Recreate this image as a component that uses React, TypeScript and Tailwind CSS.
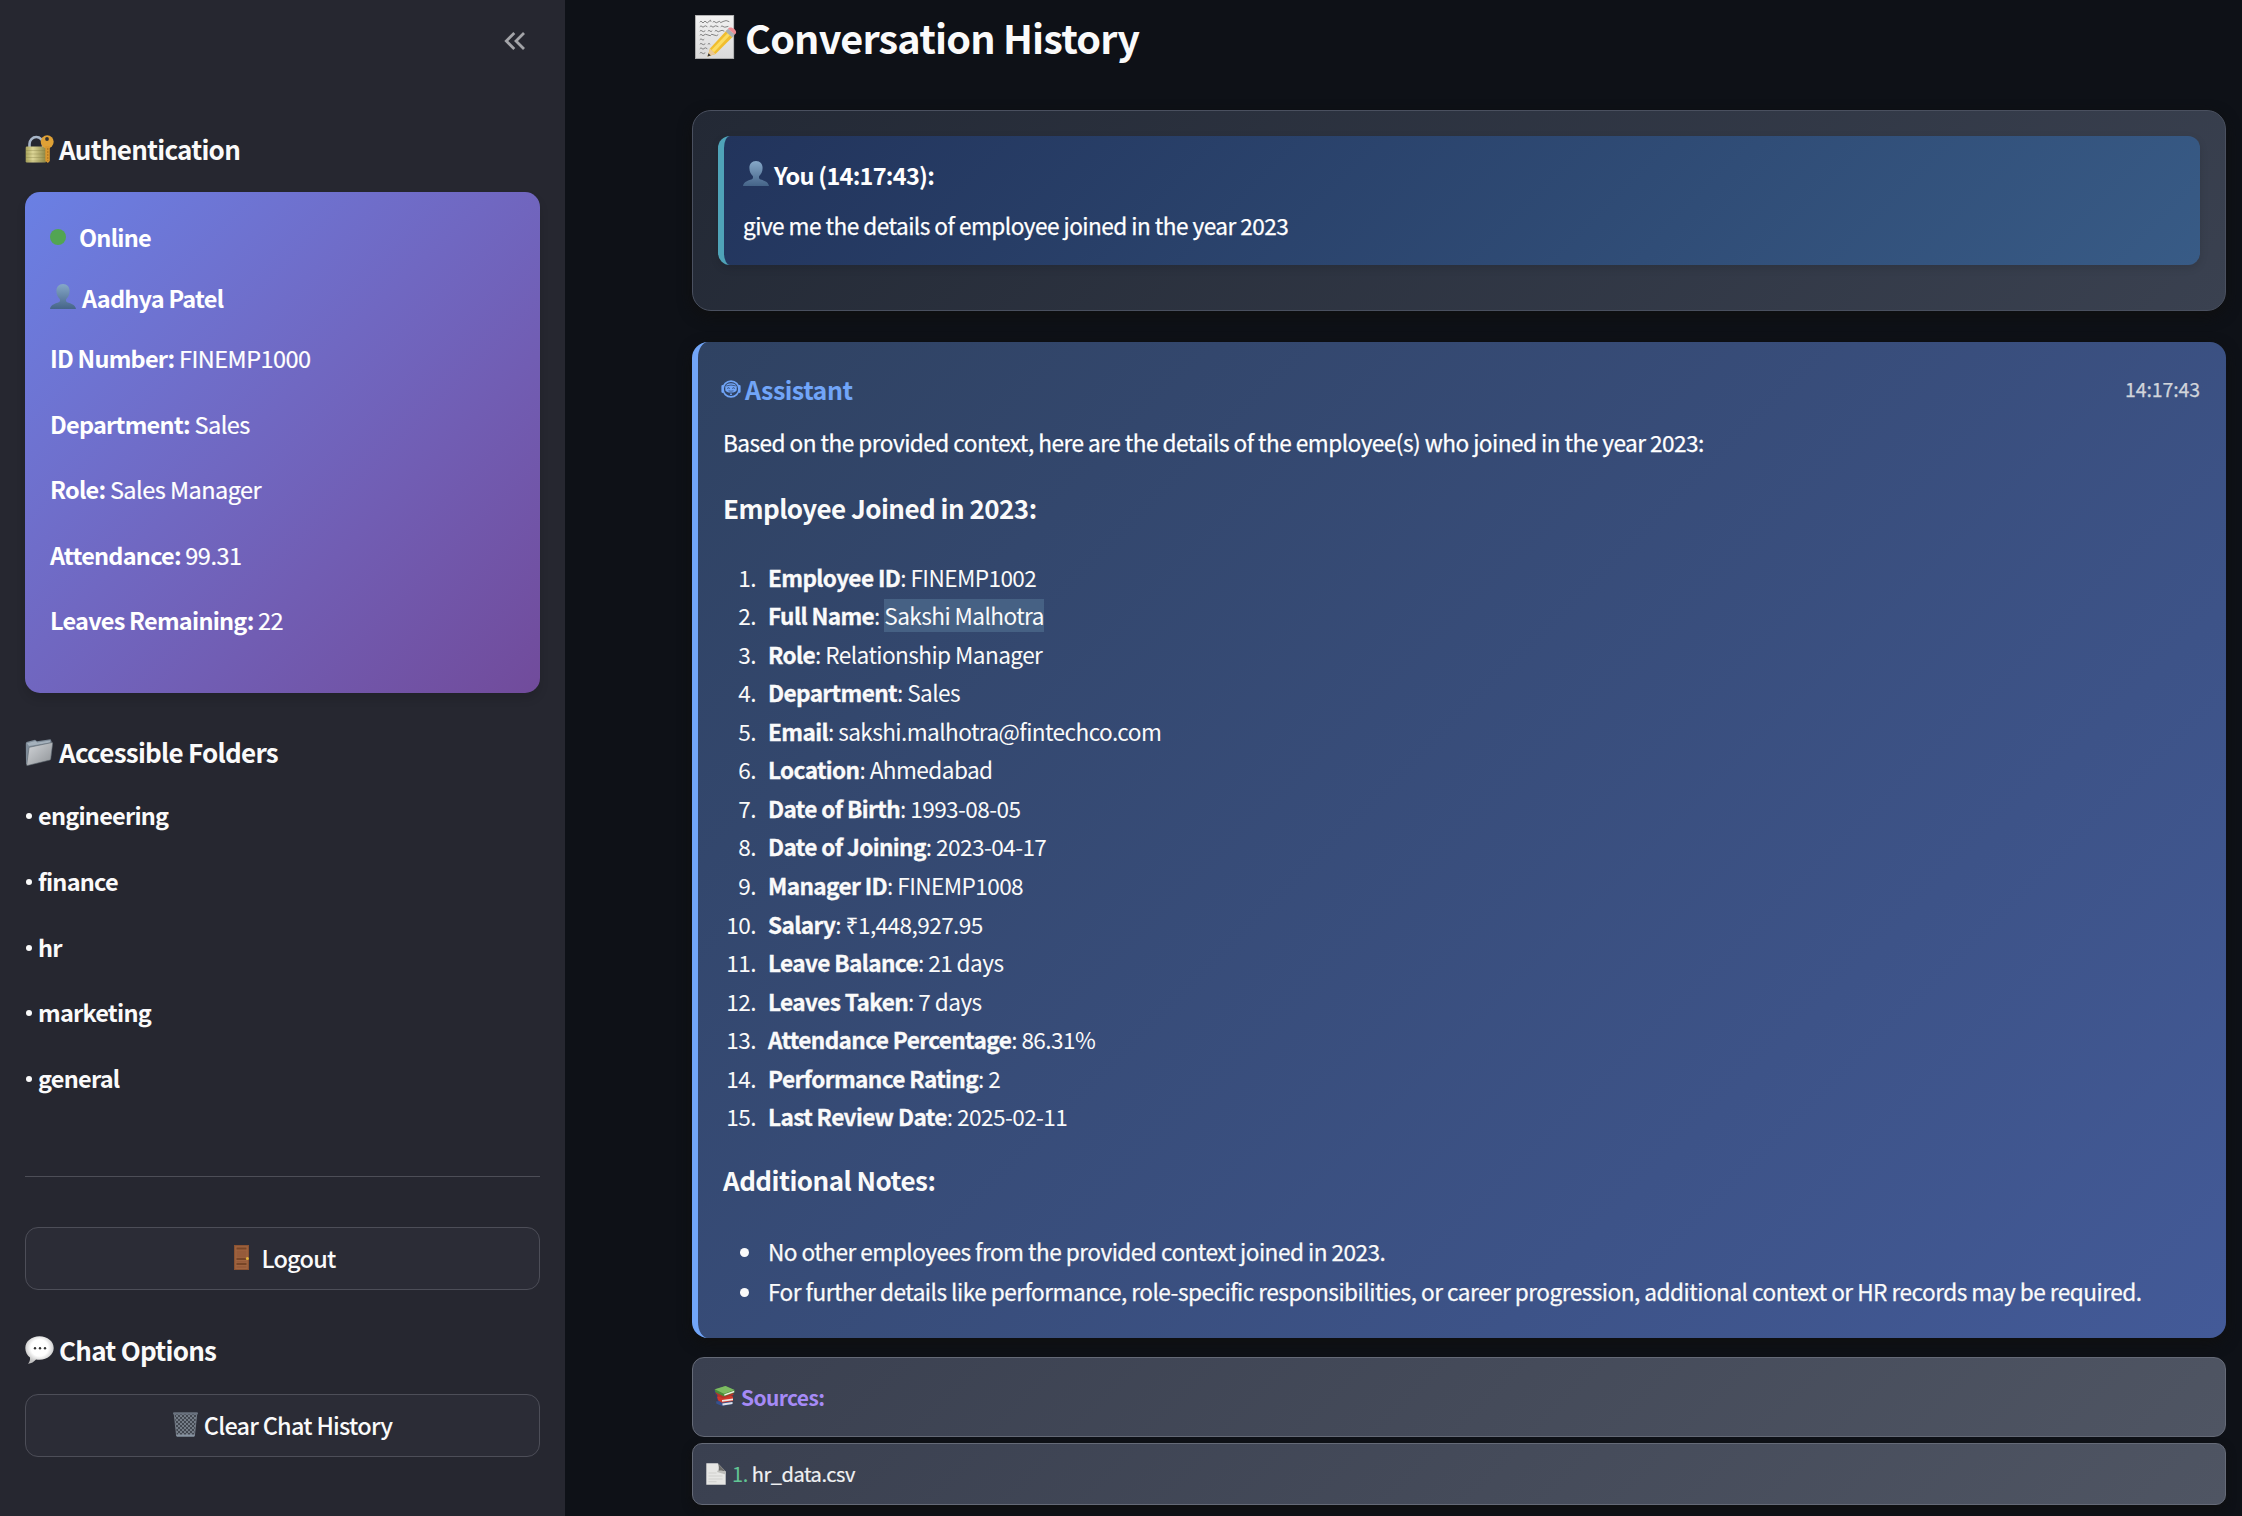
import type { ReactNode } from "react";

type IconProps = { className?: string };

function LockKeyIcon({ className }: IconProps) {
  return (
    <svg viewBox="0 0 29 28" className={className}>
      <defs>
        <linearGradient id="lockBody" x1="0" y1="0" x2="1" y2="0">
          <stop offset="0" stopColor="#a9a45c" />
          <stop offset=".35" stopColor="#dcd596" />
          <stop offset="1" stopColor="#8c8544" />
        </linearGradient>
      </defs>
      <path d="M4.500 13V9a6.800 7 0 0 1 13.600 0v4" fill="none" stroke="#a8b6c8" strokeWidth="2.600" />
      <rect x=".7" y="11.500" width="20.500" height="16" rx="1.200" fill="url(#lockBody)" />
      <path d="M1 15.500h20M1 19h20M1 22.500h20M1 26h20" stroke="#7d7840" strokeOpacity=".4" strokeWidth=".8" />
      <circle cx="22.200" cy="6.800" r="6.500" fill="#dfa136" />
      <path d="M20.300 11h4.500v15l-2 2-2.500-2.200z" fill="#d9982f" />
      <path d="M22.800 13v13" stroke="#a86d1c" strokeWidth=".9" strokeDasharray="2 1" />
      <circle cx="22" cy="4" r="1.900" fill="#33302f" />
    </svg>
  );
}

function PersonIcon({ className }: IconProps) {
  return (
    <svg viewBox="0 0 26 25" className={className}>
      <defs>
        <linearGradient id="bust" x1="0" y1="0" x2="0" y2="1">
          <stop offset="0" stopColor="#86a8c8" />
          <stop offset="1" stopColor="#456488" />
        </linearGradient>
      </defs>
      <path
        d="M13 0c4.200 0 6.600 2.900 6.600 7 0 3.400-1.500 6.400-3.400 8.100-.6 1.600 0 2.900 1.600 3.500 4.400 1.500 7.300 2.400 8.200 6.400H0c.9-4 3.800-4.900 8.200-6.400 1.600-.6 2.200-1.900 1.600-3.500C7.900 13.400 6.400 10.400 6.400 7c0-4.100 2.400-7 6.600-7z"
        fill="url(#bust)"
      />
    </svg>
  );
}

function FolderIcon({ className }: IconProps) {
  return (
    <svg viewBox="0 0 28 27" className={className}>
      <defs>
        <linearGradient id="folderFront" x1="0" y1="0" x2="1" y2="1">
          <stop offset="0" stopColor="#d3d6da" />
          <stop offset="1" stopColor="#8e9296" />
        </linearGradient>
      </defs>
      <path d="M.8 4.500 1.500 3l8.500-2.200 2 1.400L25.500.3l1 2-.5 17L3 26 1 25z" fill="#7f8c99" />
      <path d="M2 4.200 10.300 2l2 1.400L25 1.600v2L4 7z" fill="#a5b1bc" />
      <path d="m4.800 8.200 22.200-4.700c.5 0 .8.300.7.800l-2 15.700c-.1.600-.3.900-.8 1.100L2.500 26.500c-.6.100-.9-.1-.8-.7L4 9c.1-.5.300-.7.800-.8z" fill="url(#folderFront)" stroke="#5d666e" strokeWidth=".6" />
    </svg>
  );
}

function DoorIcon({ className }: IconProps) {
  return (
    <svg viewBox="0 0 15 25" className={className}>
      <rect width="15" height="25" fill="#8a5232" />
      <rect x="1.200" y="1.200" width="12.600" height="22.800" fill="#a06440" />
      <path d="M2.500 2.500h10v2h-10zM2.500 13h10v2h-10zM2.500 18h10v2h-10z" fill="#774527" />
      <path d="M2.500 5.500h10v7h-10zM2.500 16h10v1.500h-10zM2.500 21h10v2h-10z" fill="#965b3a" />
      <circle cx="13.400" cy="13.500" r="1.500" fill="#e0b23c" />
    </svg>
  );
}

function BalloonIcon({ className }: IconProps) {
  return (
    <svg viewBox="0 0 29 28" className={className}>
      <defs>
        <radialGradient id="balloon" cx=".5" cy=".42" r=".55">
          <stop offset=".55" stopColor="#ffffff" />
          <stop offset="1" stopColor="#bfbfbf" />
        </radialGradient>
      </defs>
      <path
        d="M14.500.3C22.500.3 28.700 5.400 28.700 12S22.500 23.700 14.500 23.700c-1.200 0-2.400-.1-3.500-.3-2 2.300-4.700 4-8 4.300 1.500-1.500 2.300-3.600 2-6.200C2.200 19.300.3 15.900.3 12 .3 5.400 6.500.3 14.500.3z"
        fill="url(#balloon)"
      />
      <circle cx="10" cy="12.300" r="1.200" fill="#333" />
      <circle cx="15" cy="12.300" r="1.200" fill="#333" />
      <circle cx="20" cy="12.300" r="1.200" fill="#333" />
    </svg>
  );
}

function BinIcon({ className }: IconProps) {
  return (
    <svg viewBox="0 0 25 25" className={className}>
      <defs>
        <pattern id="mesh" width="4" height="4" patternUnits="userSpaceOnUse">
          <rect width="4" height="4" fill="#424750" />
          <path d="M0 0l4 4M4 0L0 4" stroke="#828a96" strokeWidth=".8" />
        </pattern>
      </defs>
      <path d="M1.200 1.500h22.600l-2.400 22.300H3.600z" fill="url(#mesh)" />
      <path d="M1.200 1.500 3.600 24M23.800 1.500 21.400 24" stroke="#7c8591" strokeWidth=".8" />
      <rect x="0" y=".2" width="25" height="2.300" rx="1.100" fill="#69717e" />
      <path d="M3.300 22.500h18.400l-.4 2.300H3.700z" fill="#8793a1" />
    </svg>
  );
}

function MemoIcon({ className }: IconProps) {
  return (
    <svg viewBox="0 0 42 44" className={className}>
      <defs>
        <linearGradient id="sheet" x1="0" y1="0" x2="0" y2="1">
          <stop offset="0" stopColor="#f2f2f2" />
          <stop offset="1" stopColor="#d9d9d9" />
        </linearGradient>
      </defs>
      <rect x=".3" y=".3" width="38.500" height="43.400" fill="url(#sheet)" stroke="#b5b5b5" strokeWidth=".6" />
      <g fill="none" stroke="#777" strokeWidth=".9" strokeLinecap="round">
        <path d="M5 7q1-2 2 0t2 0 2 0 3-.6 2 0M18 7q1-1.500 2 0t3 0 2 0 3-.5 6 0" />
        <path d="M5 11.500q1-1.500 2 0t2 0 3 0M15 11.500q1-1.500 2 0t2 0 4 0M26 11.500q1-1.500 2 0t5 0" />
        <path d="M5 16q1-1.500 2 0t3 0M13 16q1-1.500 2 0t2 0M20 16q1-1.500 2 0t3 0 4 0" />
        <path d="M5 20q1-1.500 2 0t2 0 4 0 3 0 3 0 4 0" />
        <path d="M5 24.500q1-1.500 2 0t2 0" />
        <path d="M5 29q1-1.500 2 0t3 0M13 29q1-1.500 2 0" />
        <path d="M5 33.500q1-1.500 2 0t2 0 3 0" />
        <path d="M5 38q1-1.500 2 0t3 0" />
      </g>
      <path d="M12.500 41.500 15 33.500 32 15l6.800 5.800L20.500 39z" fill="#f0bd2e" />
      <path d="M16.500 35 34 16.700l2.300 2L19 37.200z" fill="#fbdc62" />
      <path d="m12.500 41.500 2.500-8 5.500 5.500z" fill="#e9c898" />
      <path d="m12.500 41.500 1-3.300 2.300 2.300z" fill="#333" />
      <path d="m30.500 16.600 2.600-2.800 6.800 5.800-2.600 2.800z" fill="#aab0b5" />
      <path d="m33 13.800 1-1c1.500-.8 3.500-.3 5.300 1.200 1.700 1.500 2.200 3.300 1.500 4.600l-1 1z" fill="#ee8b92" />
    </svg>
  );
}

function BooksIcon({ className }: IconProps) {
  return (
    <svg viewBox="0 0 21 20" className={className}>
      <path d="M2 15.500 12 14l6.500 2-.3 2.300L8.500 20 2.500 17.800z" fill="#35518f" />
      <path d="m8.300 17.600 10.200-1.500v1.800L8.700 19.400z" fill="#dfe3e8" />
      <path d="M3 10.500 14 8l5 2.800v4.300L8 16.800 3.500 14z" fill="#d0392b" />
      <path d="m8 14 11-1.500v1.700L8 15.800z" fill="#eee7e2" />
      <path d="M1 6.500 19 6l.5 3L9 12.500 2 9z" fill="#b5342a" />
      <path d="M.5 3.500 11.500 0 20.500 4v2.600L10 10.400 1 6z" fill="#4c8b38" />
      <path d="M.8 3.300 11.500 0l9 4L10 7.800z" fill="#7dbb62" />
      <path d="m10.300 8.200 9.900-3.500v1.500L10.400 9.700z" fill="#f1f1e8" />
      <path d="M.6 4.500v2.700l2 1.200v3.500l1 3" stroke="#343c72" strokeWidth="1" fill="none" />
    </svg>
  );
}

function PageIcon({ className }: IconProps) {
  return (
    <svg viewBox="0 0 20 22" className={className}>
      <path d="M.3.300h11.500L19.700 8.500v13.200H.3z" fill="#e6e6e4" />
      <path d="M11.800.3c1.300 2.600 1.200 5.200.7 7.600 2.300-.4 4.900-.3 7.200.6z" fill="#6e6e6c" />
      <path d="M12.300 6.500 11 9l8.700 2.500v-3c-2.300-.9-4.900-1-7.200-.6z" fill="#bcbcb9" />
      <path d="M2.500 10h8M2.500 13h14M2.500 16h14M2.500 18.700h8" stroke="#c6c6c4" strokeWidth=".7" />
    </svg>
  );
}

function BotIcon({ className }: IconProps) {
  return (
    <svg viewBox="0 0 20 18" className={className} fill="none" stroke="currentColor">
      <ellipse cx="10" cy="9" rx="8" ry="7.900" strokeWidth="1.700" />
      <path d="M1.500 6.200v5.600M18.500 6.200v5.600" strokeWidth="2.200" strokeLinecap="round" />
      <path d="M4.300 6.800C4.800 4.300 7 3.200 10 3.200s5.200 1.100 5.700 3.600v2.900c0 1.800-2.700 2.900-5.700 2.900s-5.700-1.100-5.700-2.900z" fill="currentColor" stroke="none" />
      <path d="M5.200 5.900q4.800-1.700 9.600 0" stroke="#31456b" strokeWidth=".8" />
      <path d="M6.300 8.400q1.200-1.200 2.400 0M11.300 8.400q1.200-1.200 2.400 0" stroke="#31456b" strokeWidth="1" />
      <path d="M7.500 10.800q2.500.8 5 0" stroke="#31456b" strokeWidth=".7" />
      <path d="M10 13.600v1.500" strokeWidth="1.800" />
    </svg>
  );
}

function SideHeading({ icon, children, className }: { icon: ReactNode; children: ReactNode; className: string }) {
  return (
    <h3 className={`flex h-[36px] shrink-0 items-center gap-[5px] whitespace-nowrap text-[26px] leading-[36px] font-semibold tracking-[-0.740px] ${className}`}>
      {icon}
      {children}
    </h3>
  );
}

const profile = [
  ["ID Number:", "FINEMP1000"],
  ["Department:", "Sales"],
  ["Role:", "Sales Manager"],
  ["Attendance:", "99.31"],
  ["Leaves Remaining:", "22"],
];

const folders = ["engineering", "finance", "hr", "marketing", "general"];

const details = [
  ["Employee ID", "FINEMP1002"],
  ["Full Name", "Sakshi Malhotra"],
  ["Role", "Relationship Manager"],
  ["Department", "Sales"],
  ["Email", "sakshi.malhotra@fintechco.com"],
  ["Location", "Ahmedabad"],
  ["Date of Birth", "1993-08-05"],
  ["Date of Joining", "2023-04-17"],
  ["Manager ID", "FINEMP1008"],
  ["Salary", "₹1,448,927.95"],
  ["Leave Balance", "21 days"],
  ["Leaves Taken", "7 days"],
  ["Attendance Percentage", "86.31%"],
  ["Performance Rating", "2"],
  ["Last Review Date", "2025-02-11"],
];

const notes = [
  "No other employees from the provided context joined in 2023.",
  "For further details like performance, role-specific responsibilities, or career progression, additional context or HR records may be required.",
];

function Sidebar() {
  return (
    <aside className="flex h-full w-[565px] shrink-0 flex-col bg-[#262730] px-[25px] text-[23.500px] leading-[38px] tracking-[-0.760px] text-[#fafafa]">
      <div className="flex h-[131px] shrink-0 items-start justify-end pt-[32px] pr-[15px]">
        <svg viewBox="0 0 21 18" className="h-[18px] w-[21px]" fill="none" stroke="#a3a4a8" strokeWidth="2.800">
          <path d="M10.300 1 2.300 9l8 8M20 1l-8 8 8 8" />
        </svg>
      </div>
      <SideHeading className="" icon={<LockKeyIcon className="h-[28px] w-[29px]" />}>
        Authentication
      </SideHeading>
      <section className="mt-[25px] flex h-[501px] shrink-0 flex-col rounded-[15px] bg-linear-135 from-[#6a80e4] to-[#714b9b] px-[25px] pt-[26px] whitespace-nowrap text-white shadow-[0_6px_10px_rgba(0,0,0,0.12)]">
        <div className="flex items-center font-semibold">
          <span className="mr-[13px] size-[16px] rounded-full bg-[#52a552]" />
          Online
        </div>
        <div className="mt-[22.500px] flex items-center gap-[6px] font-semibold">
          <PersonIcon className="mb-[2px] h-[25px] w-[26px]" />
          Aadhya Patel
        </div>
        <div className="mt-[22.500px] flex flex-col gap-[27.500px]">
          {profile.map(([label, value]) => (
            <p key={label}>
              <span className="font-semibold">{label}</span>{" "}
              <span className="tracking-[-0.530px] [-webkit-text-stroke:0.2px_white]">{value}</span>
            </p>
          ))}
        </div>
      </section>
      <SideHeading className="mt-[41px]" icon={<FolderIcon className="mr-[1px] h-[27px] w-[28px]" />}>
        Accessible Folders
      </SideHeading>
      <ul className="mt-[26px] flex flex-col gap-[27.800px] font-semibold">
        {folders.map((f) => (
          <li key={f} className="flex items-center">
            <span className="mt-[2px] mr-[6px] ml-[1px] size-[6px] rounded-full bg-[#fafafa]" />
            {f}
          </li>
        ))}
      </ul>
      <hr className="mt-[79px] border-t border-[#4d4e57]" />
      <button className="mt-[50px] flex h-[63px] shrink-0 items-center justify-center rounded-[13px] border border-[#4d4e58] bg-[#2b2c36] pb-[1px] font-medium">
        <DoorIcon className="mr-[12px] mb-[1px] ml-[5px] h-[25px] w-[15px]" />
        Logout
      </button>
      <SideHeading className="mt-[42px]" icon={<BalloonIcon className="h-[28px] w-[29px]" />}>
        Chat Options
      </SideHeading>
      <button className="mt-[26px] flex h-[63px] shrink-0 items-center justify-center rounded-[13px] border border-[#4d4e58] bg-[#2b2c36] pb-[1px] font-medium">
        <BinIcon className="mr-[6px] mb-[1px] h-[25px] w-[25px]" />
        Clear Chat History
      </button>
    </aside>
  );
}

export default function App() {
  return (
    <div className="flex h-[1516px] w-[2242px] overflow-hidden bg-[#0e1117] font-['Noto_Sans_CJK_SC','Noto_Sans',sans-serif]">
      <Sidebar />
      <main className="ml-[127px] flex w-[1534px] flex-col pt-[7px] text-[22.6px] leading-[38px] tracking-[-0.520px] whitespace-nowrap text-[#fafafa]">
        <h1 className="flex items-center text-[39.600px] leading-[60px] font-semibold tracking-[-0.820px]">
          <MemoIcon className="mr-[8px] ml-[3px] h-[44px] w-[42px]" />
          Conversation History
        </h1>

        <section className="mt-[43px] h-[201px] shrink-0 rounded-[19px] border border-[#4a505f] bg-linear-135 from-[#232935] to-[#3a4150] p-[25px] shadow-[0_5px_14px_rgba(16,16,16,0.9)]">
          <div className="h-[129px] rounded-[12px] border-l-[6px] border-[#4fa3b8] bg-linear-135 from-[#22345c] to-[#385b86] pt-[20px] pl-[19px] text-white shadow-[0_3px_8px_rgba(0,0,0,0.12)]">
            <p className="flex items-center text-[23.500px] font-semibold tracking-[-0.740px]">
              <PersonIcon className="mr-[5px] mb-[3px] h-[25px] w-[26px]" />
              You (14:17:43):
            </p>
            <p className="mt-[13px] [-webkit-text-stroke:0.25px_white]">
              give me the details of employee joined in the year 2023
            </p>
          </div>
        </section>

        <section className="mt-[31px] h-[996px] shrink-0 rounded-[16px] border-l-[6px] border-[#71a5f8] bg-linear-135 from-[#2f4262] to-[#435a98] pt-[28px] pr-[26px] pl-[25px] shadow-[0_5px_14px_rgba(16,16,16,0.9)]">
          <div className="flex h-[37px] items-center justify-between">
            <h4 className="flex items-center text-[25px] leading-[36px] font-semibold tracking-[-0.500px] text-[#71a5f8]">
              <BotIcon className="mr-[4px] -ml-[2px] h-[18px] w-[20px]" />
              Assistant
            </h4>
            <span className="pt-[1px] text-[19.500px] leading-[36px] tracking-[-0.100px] text-[#d1d5db] [-webkit-text-stroke:0.25px_#d1d5db]">
              14:17:43
            </span>
          </div>
          <p className="mt-[17px] text-white [-webkit-text-stroke:0.25px_white]">
            Based on the provided context, here are the details of the employee(s) who joined in the year 2023:
          </p>
          <h3 className="mt-[28px] text-[26px] leading-[36px] font-semibold tracking-[-0.540px]">Employee Joined in 2023:</h3>
          <ol className="mt-[32.500px] leading-[38.570px] tracking-[-0.570px]">
            {details.map(([label, value], i) => (
              <li key={label} className="flex">
                <span className="mr-[12px] w-[33px] text-right">{i + 1}.</span>
                <span>
                  <strong className="font-bold tracking-[-0.620px] [-webkit-text-stroke:0.3px_#fafafa]">{label}</strong>:{" "}
                  <span className={i === 1 ? "bg-[#466184]" : ""}>{value}</span>
                </span>
              </li>
            ))}
          </ol>
          <h3 className="mt-[25.500px] text-[26px] leading-[36px] font-semibold tracking-[-0.520px]">Additional Notes:</h3>
          <ul className="mt-[33.500px] leading-[40px] tracking-[-0.510px] [-webkit-text-stroke:0.25px_#fafafa]">
            {notes.map((n) => (
              <li key={n} className="flex items-center">
                <span className="mt-[2px] mr-[19px] ml-[17px] size-[9px] shrink-0 rounded-full bg-[#fafafa]" />
                {n}
              </li>
            ))}
          </ul>
        </section>

        <section className="mt-[19px] flex h-[80px] shrink-0 items-center rounded-[12px] border border-[#656a77] bg-linear-135 from-[#3a4050] to-[#4f5563] px-[21px] text-[21px] font-semibold tracking-[-0.620px] text-[#a58af6]">
          <BooksIcon className="mr-[6px] mb-[2px] h-[20px] w-[21px]" />
          Sources:
        </section>
        <section className="mt-[6px] flex h-[62px] shrink-0 items-center rounded-[10px] border border-[#656a77] bg-linear-135 from-[#3a4050] to-[#4f5563] px-[13px] text-[20px] tracking-[-0.450px] shadow-[0_4px_10px_rgba(16,16,16,0.9)]">
          <PageIcon className="mr-[6px] h-[22px] w-[20px]" />
          <span className="mr-[4px] text-[#62c595]">1.</span>
          <span className="text-[#f0f1f3] [-webkit-text-stroke:0.2px_#f0f1f3]">hr_data.csv</span>
        </section>
      </main>
    </div>
  );
}
